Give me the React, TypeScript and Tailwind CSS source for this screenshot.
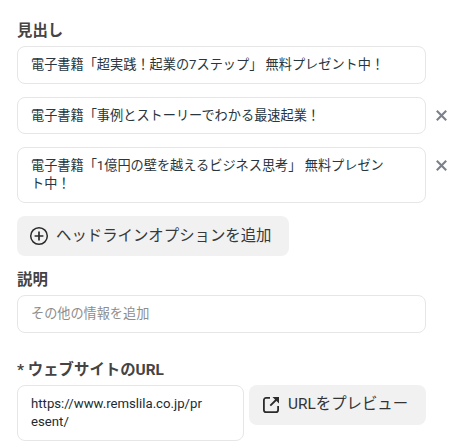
import type { ReactNode } from "react";

const headlines = [
  {
    text: "電子書籍「超実践！起業の7ステップ」 無料プレゼント中！",
    className: "h-[38px] mb-[13px]",
    removable: false,
  },
  {
    text: "電子書籍「事例とストーリーでわかる最速起業！",
    className: "h-[37px] mb-[13px]",
    removable: true,
  },
  {
    text: "電子書籍「1億円の壁を越えるビジネス思考」 無料プレゼント中！",
    className: "h-14 mb-[13px]",
    removable: true,
  },
];

function Label({ children }: { children: ReactNode }) {
  return (
    <h3 className="h-[30px] text-[15.4px] leading-[30px] font-bold whitespace-nowrap text-[#444444]">
      {children}
    </h3>
  );
}

function CloseIcon() {
  return (
    <svg width="11" height="11" viewBox="0 0 11 11" fill="none" stroke="#7b808a" strokeWidth="2.1">
      <path d="M.8.8l9.4 9.4M10.2.8L.8 10.2" />
    </svg>
  );
}

function PlusCircleIcon() {
  return (
    <svg width="20" height="20" viewBox="0 0 20 20" fill="none" stroke="#2b2b2b" strokeWidth="1.5">
      <circle cx="10" cy="10" r="8.3" />
      <path d="M10 5.6v8.8M5.6 10h8.8" strokeWidth="1.7" />
    </svg>
  );
}

function ExternalIcon() {
  return (
    <svg width="18" height="18" viewBox="0 0 18 18" fill="none" stroke="#2b2b2b" strokeWidth="1.8">
      <path d="M8 1.9H4.1a2.2 2.2 0 0 0-2.2 2.2v9.8a2.2 2.2 0 0 0 2.2 2.2h9.8a2.2 2.2 0 0 0 2.2-2.2V10" />
      <path d="M8.3 9.7l6.2-6.2" />
      <path d="M10.5 1h6.5v6.5z" fill="#2b2b2b" stroke="none" />
    </svg>
  );
}

export default function App() {
  return (
    <div className="h-[448px] w-[469px] overflow-hidden bg-white pt-4 pl-[17px] font-['Roboto','Noto_Sans_CJK_JP',sans-serif]">
      {/* Headlines */}
      <Label>見出し</Label>
      {headlines.map((item) => (
        <div key={item.text} className={`flex items-center ${item.className}`}>
          <div className="h-full w-[409px] rounded-lg border border-[#e6e6e6] pt-[9px] pr-9 pl-[13px] text-[13.18px] leading-[18px] break-all text-[#283640]">
            {item.text}
          </div>
          {item.removable && (
            <button className="ml-2.5 flex h-[37px] items-center self-start" aria-label="削除">
              <CloseIcon />
            </button>
          )}
        </div>
      ))}
      <button className="mb-[9px] flex h-10 w-[272px] items-center rounded-lg bg-[#f1f1f1] pl-3 text-[15.4px] whitespace-nowrap text-[#383838]">
        <PlusCircleIcon />
        <span className="ml-[7px] pt-0.5">ヘッドラインオプションを追加</span>
      </button>

      {/* Description */}
      <Label>説明</Label>
      <input
        className="mb-[22px] block h-[38px] w-[409px] rounded-lg border border-[#e6e6e6] px-[13px] pb-0.5 text-[13.15px] placeholder:text-[#8d8d8d]"
        placeholder="その他の情報を追加"
      />

      {/* Website URL */}
      <Label>* ウェブサイトのURL</Label>
      <div className="flex items-start gap-[5px]">
        <div className="h-14 w-[227px] rounded-lg border border-[#e6e6e6] py-[9px] pr-9 pl-[13px] text-[13.2px] leading-[18px] break-all text-[#1c2b33]">
          https://www.remslila.co.jp/present/
        </div>
        <button className="flex h-10 w-[177px] items-center rounded-lg bg-[#f1f1f1] pl-[13px] text-[15.4px] whitespace-nowrap text-[#333333]">
          <ExternalIcon />
          <span className="ml-2">URLをプレビュー</span>
        </button>
      </div>
    </div>
  );
}
